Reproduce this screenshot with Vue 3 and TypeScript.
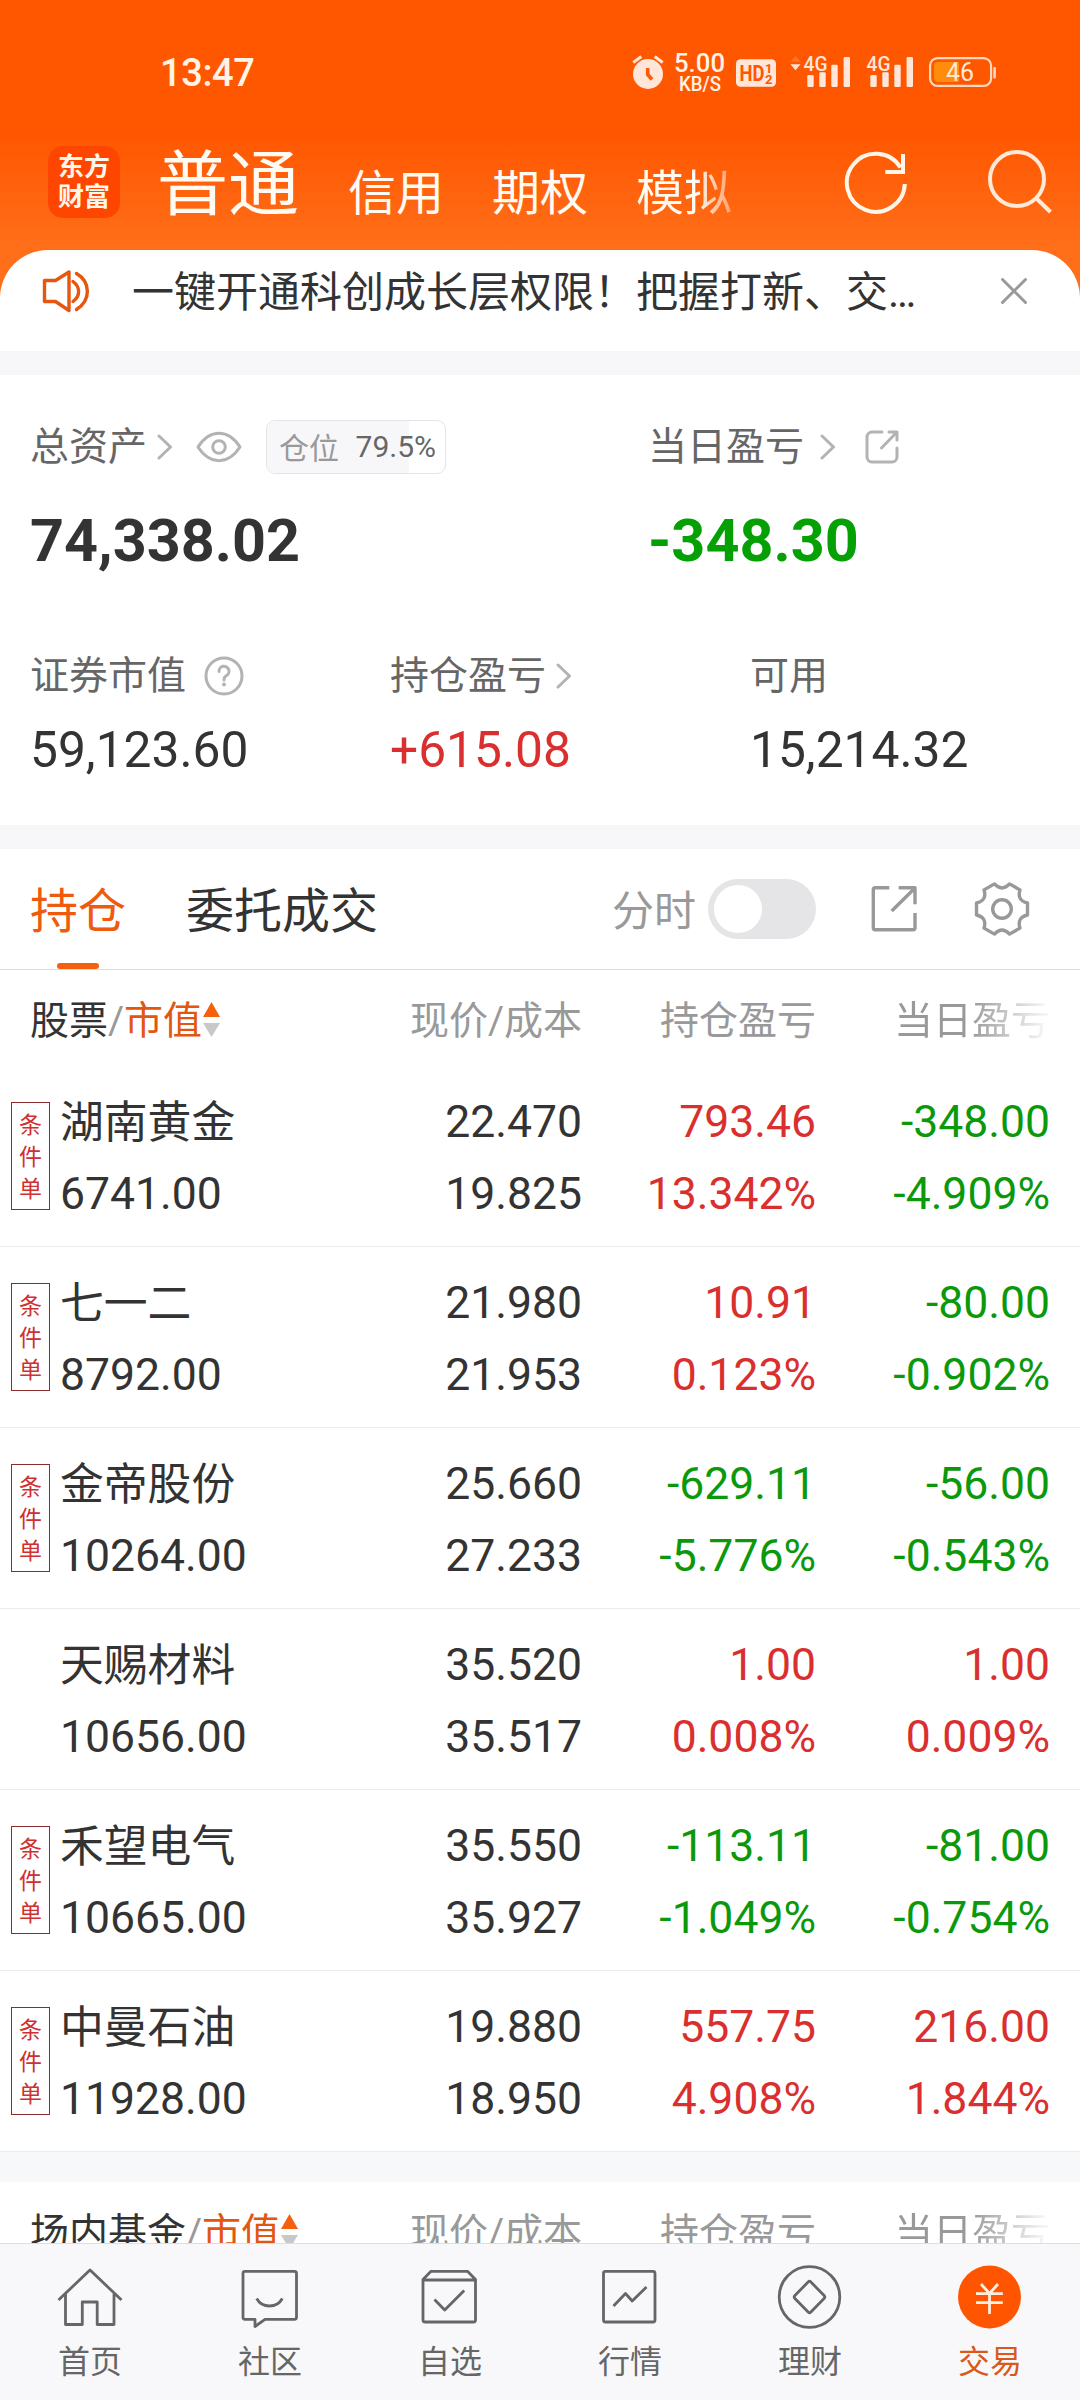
<script setup lang="ts">
interface Holding {
  name: string
  value: string
  price: string
  cost: string
  pnl: string
  pnlRate: string
  day: string
  dayRate: string
  tagged: boolean
}

const holdings: Holding[] = [
  { name: '湖南黄金', value: '6741.00', price: '22.470', cost: '19.825', pnl: '793.46', pnlRate: '13.342%', day: '-348.00', dayRate: '-4.909%', tagged: true },
  { name: '七一二', value: '8792.00', price: '21.980', cost: '21.953', pnl: '10.91', pnlRate: '0.123%', day: '-80.00', dayRate: '-0.902%', tagged: true },
  { name: '金帝股份', value: '10264.00', price: '25.660', cost: '27.233', pnl: '-629.11', pnlRate: '-5.776%', day: '-56.00', dayRate: '-0.543%', tagged: true },
  { name: '天赐材料', value: '10656.00', price: '35.520', cost: '35.517', pnl: '1.00', pnlRate: '0.008%', day: '1.00', dayRate: '0.009%', tagged: false },
  { name: '禾望电气', value: '10665.00', price: '35.550', cost: '35.927', pnl: '-113.11', pnlRate: '-1.049%', day: '-81.00', dayRate: '-0.754%', tagged: true },
  { name: '中曼石油', value: '11928.00', price: '19.880', cost: '18.950', pnl: '557.75', pnlRate: '4.908%', day: '216.00', dayRate: '1.844%', tagged: true },
]

const tone = (v: string): string => (v.startsWith('-') ? 'down' : 'up')

const position = 79.5
const bars = [
  { x: 0, h: 12 },
  { x: 12, h: 14.7 },
  { x: 24, h: 22.3 },
  { x: 36.3, h: 30 },
]
</script>

<template>
  <div class="page">
    <header class="top">
      <div class="status">
        <span class="clock">13:47</span>
        <svg class="status-icons" width="380" height="50" viewBox="625 50 380 50">
          <g fill="#ffe6d9">
            <circle cx="648" cy="74" r="15" />
            <path d="M633.3 62.5L641.3 56.5M654.7 56.5L662.7 62.5" stroke="#ffe6d9" stroke-width="3" fill="none" />
            <path d="M647.7 68v6.500l4.300 5" stroke="#ff5a0a" stroke-width="3.600" fill="none" />
            <text x="674" y="72.300" font-size="25" font-weight="500" textLength="51" lengthAdjust="spacingAndGlyphs" fill="#fff3e8">5.00</text>
            <text x="679" y="91" font-size="19.500" font-weight="500" textLength="42" lengthAdjust="spacingAndGlyphs" fill="#fff3e8">KB/S</text>
            <rect x="736" y="59.300" width="40" height="27.400" rx="4.500" />
            <text x="739.500" y="81" font-size="22" font-weight="700" textLength="25" lengthAdjust="spacingAndGlyphs" fill="#ff5500">HD</text>
            <text x="765" y="72.800" font-size="13" font-weight="700" fill="#ff5500">1</text>
            <text x="765" y="84" font-size="13" font-weight="700" fill="#ff5500">2</text>
            <path d="M790.500 61.800l5-5.800 5 5.800z" opacity=".22" />
            <path d="M790.500 64.200h10l-5 6z" />
            <text x="803.500" y="70.800" font-size="21" font-weight="500" textLength="24" lengthAdjust="spacingAndGlyphs">4G</text>
            <text x="866.500" y="70.800" font-size="21" font-weight="500" textLength="24" lengthAdjust="spacingAndGlyphs">4G</text>
            <template v-for="o in [807.3, 870.3]" :key="o">
              <rect v-for="b in bars" :key="b.x" :x="o + b.x" :y="87 - b.h" width="6.400" :height="b.h" rx="1.200" />
            </template>
          </g>
          <rect x="930.100" y="58.100" width="61" height="27.800" rx="7.500" fill="none" stroke="#ffd9bf" stroke-width="2.200" />
          <path d="M938 62h21v20h-21a4 4 0 0 1-4-4v-12a4 4 0 0 1 4-4z" fill="#ff8c0a" />
          <rect x="993.300" y="67" width="2.600" height="11.500" rx="1" fill="#ffd9bf" />
          <text x="946" y="81.300" font-size="26" textLength="28" lengthAdjust="spacingAndGlyphs" fill="#ffe9d2">46</text>
        </svg>
      </div>
      <div class="titlebar">
        <div class="logo"><span>东方</span><span>财富</span></div>
        <nav class="modes">
          <span class="mode current">普通</span>
          <span class="mode">信用</span>
          <span class="mode">期权</span>
          <span class="mode faded">模拟</span>
        </nav>
        <svg class="refresh" width="66" height="66" viewBox="-33 -33 66 66" fill="none" stroke="#fff6ea" stroke-width="4">
          <path d="M28.800 1A29 29 0 1 1 24.500-15.500" />
          <path d="M27-29V-11H9.300" />
        </svg>
        <svg class="search" width="66" height="66" viewBox="-33 -33 66 66" fill="none" stroke="#ffe9d8" stroke-width="4">
          <circle cx="-3" cy="-4" r="27" />
          <path d="M16 15L30.500 29" />
        </svg>
      </div>
    </header>

    <main class="body">
      <section class="notice">
        <svg width="48" height="44" viewBox="42 269 48 44" fill="none" stroke="#e6560f" stroke-width="3.400" stroke-linejoin="round" stroke-linecap="round">
          <path d="M44.500 280.500H55.500L69 272V310.500L55.500 301.500H44.500Z" />
          <path d="M73 281.500C80.500 287 80.500 296 73 301.500M76.500 273.500C91 282 91 300.500 76.500 309.500" />
        </svg>
        <p>一键开通科创成长层权限！把握打新、交…</p>
        <svg width="30" height="30" viewBox="-15 -15 30 30" stroke="#999" stroke-width="3" stroke-linecap="round">
          <path d="M-11.500-11.500L11.500 11.500M11.500-11.500L-11.500 11.500" />
        </svg>
      </section>

      <section class="assets">
        <div class="pair">
          <div class="cell">
            <div class="label">
              <span class="text">总资产</span>
              <svg class="chev" width="16" height="26" viewBox="0 0 16 26"><path d="M2 2L13.500 13L2 24" /></svg>
              <svg class="eye" width="46" height="32" viewBox="-23 -16 46 32">
                <path d="M-21 0C-9-18.200 9-18.200 21 0C9 18.200-9 18.200-21 0Z" />
                <circle r="6.300" />
              </svg>
              <span class="pill">
                <i class="fill" :style="{ width: position + '%' }"></i>
                <span class="pill-label">仓位</span>
                <span class="pill-value">{{ position }}%</span>
              </span>
            </div>
            <div class="big">74,338.02</div>
          </div>
          <div class="cell">
            <div class="label">
              <span class="text">当日盈亏</span>
              <svg class="chev wide" width="16" height="26" viewBox="0 0 16 26"><path d="M2 2L13.500 13L2 24" /></svg>
              <svg class="share" width="34" height="34" viewBox="0 0 34 34">
                <path d="M17 2H7a5 5 0 0 0-5 5V27a5 5 0 0 0 5 5H27a5 5 0 0 0 5-5V18M24 2H32V10M31.500 2.500L16.500 18" />
              </svg>
            </div>
            <div class="big down">-348.30</div>
          </div>
        </div>
        <div class="triple">
          <div class="cell">
            <div class="label">
              <span class="text">证券市值</span>
              <svg class="help" width="40" height="40" viewBox="-20 -20 40 40">
                <circle r="18" />
                <path d="M-5-4.500A5 5 0 1 1 2-.2C.5.800 0 1.800 0 4" />
                <circle class="dot" cy="8.500" r="2" />
              </svg>
            </div>
            <div class="mid">59,123.60</div>
          </div>
          <div class="cell">
            <div class="label">
              <span class="text">持仓盈亏</span>
              <svg class="chev" width="16" height="26" viewBox="0 0 16 26"><path d="M2 2L13.500 13L2 24" /></svg>
            </div>
            <div class="mid up">+615.08</div>
          </div>
          <div class="cell">
            <div class="label"><span class="text">可用</span></div>
            <div class="mid">15,214.32</div>
          </div>
        </div>
      </section>

      <section class="tabs">
        <span class="tab on">持仓</span>
        <span class="tab">委托成交</span>
        <span class="minute">分时</span>
        <span class="switch"><i></i></span>
        <svg class="tool" width="46" height="46" viewBox="871 886 46 46">
          <path d="M889.300 887.700H875.300a2 2 0 0 0-2 2V927.700a2 2 0 0 0 2 2H913a2 2 0 0 0 2-2V913M898.700 887.700H915V904.300M914.500 888.500L891.700 911" />
        </svg>
        <svg class="tool gear" width="58" height="58" viewBox="-29 -29 58 58">
          <path d="M25.500-6V6Q14.700 8.500 17.950 19.100L7.550 25.100Q0 17-7.550 25.100L-17.950 19.100Q-14.700 8.500-25.500 6V-6Q-14.700-8.500-17.950-19.100L-7.550-25.100Q0-17 7.550-25.100L17.950-19.100Q14.700-8.500 25.500-6Z" />
          <circle r="9.300" />
        </svg>
      </section>

      <section class="table">
        <div class="thead">
          <span class="first">股票<em>/</em><b>市值</b><svg width="17" height="36" viewBox="0 0 17 36"><path d="M8.500 0L17 15H0Z" fill="#f5600f" /><path d="M0 21H17L8.500 35Z" fill="#c8c8c8" /></svg></span>
          <span>现价/成本</span>
          <span>持仓盈亏</span>
          <span class="fadeout">当日盈亏</span>
        </div>
        <div v-for="h in holdings" :key="h.name" class="row">
          <div class="who">
            <div class="tag" :class="{ none: !h.tagged }">
              <template v-if="h.tagged"><span>条</span><span>件</span><span>单</span></template>
            </div>
            <div class="stack left"><span class="name">{{ h.name }}</span><span>{{ h.value }}</span></div>
          </div>
          <div class="stack"><span>{{ h.price }}</span><span>{{ h.cost }}</span></div>
          <div class="stack" :class="tone(h.pnl)"><span>{{ h.pnl }}</span><span>{{ h.pnlRate }}</span></div>
          <div class="stack" :class="tone(h.day)"><span>{{ h.day }}</span><span>{{ h.dayRate }}</span></div>
        </div>
      </section>

      <section class="table funds">
        <div class="thead">
          <span class="first">场内基金<em>/</em><b>市值</b><svg width="17" height="36" viewBox="0 0 17 36"><path d="M8.500 0L17 15H0Z" fill="#f5600f" /><path d="M0 21H17L8.500 35Z" fill="#c8c8c8" /></svg></span>
          <span>现价/成本</span>
          <span>持仓盈亏</span>
          <span class="fadeout">当日盈亏</span>
        </div>
      </section>
    </main>

    <footer class="nav">
      <div class="item">
        <svg width="66" height="66" viewBox="-33 -33 66 66"><path d="M-31.500 3L0-27L31.500 3M-24.500-3V27.500H-7.700V5H7.200V27.500H24V-3" /></svg>
        <span>首页</span>
      </div>
      <div class="item">
        <svg width="66" height="66" viewBox="-33 -33 66 66"><path d="M-25-25.700H24.500a2 2 0 0 1 2 2V20.300a2 2 0 0 1-2 2H-5L-15 29.500V22.300H-25a2 2 0 0 1-2-2V-23.700a2 2 0 0 1 2-2ZM-13.300 1.500C-8 11.500 7 11.500 12.300 1.500" /></svg>
        <span>社区</span>
      </div>
      <div class="item">
        <svg width="66" height="66" viewBox="-33 -33 66 66"><path d="M-27-17.500L-19-25.700H17.500L25.500-17.500V23a2 2 0 0 1-2 2H-25a2 2 0 0 1-2-2ZM-27-17H25.500M-15.500 2.500L-5.300 13L14.200-6.500" /></svg>
        <span>自选</span>
      </div>
      <div class="item">
        <svg width="66" height="66" viewBox="-33 -33 66 66"><rect x="-26.500" y="-25.700" width="51.500" height="50.700" rx="2" /><path d="M-16.500 9L-4.500-3.500L2.200 4L16.500-10" /></svg>
        <span>行情</span>
      </div>
      <div class="item">
        <svg width="66" height="66" viewBox="-33 -33 66 66"><circle cx="-.5" r="30.300" /><path d="M-1.900-15Q-.5-16.400.900-15L14.100-1.400Q15.500 0 14.100 1.400L.900 15Q-.5 16.400-1.900 15L-15.100 1.400Q-16.500 0-15.100-1.400Z" /></svg>
        <span>理财</span>
      </div>
      <div class="item active">
        <svg width="66" height="66" viewBox="-33 -33 66 66"><circle class="disc" cx="-.5" r="31.500" /><path class="yen" d="M-9-13L-.5-3.500L8-13M-.5-3.500V17M-14-3.300H12.800M-14 5.700H12.800" /></svg>
        <span>交易</span>
      </div>
    </footer>
  </div>
</template>

<style>
body {
  margin: 0;
  background: #fff;
}
</style>

<style scoped>
.page {
  width: 1080px;
  height: 2400px;
  display: flex;
  flex-direction: column;
  overflow: hidden;
  background: linear-gradient(#ff5600 0, #ff5600 130px, #ff6f1a 250px, #ff6f1a 310px, #fff 310px);
  font-family: Roboto, "Noto Sans CJK SC", sans-serif;
  font-weight: 400;
  color: #333;
}
svg {
  display: block;
  flex: none;
}
.top {
  height: 250px;
  flex: none;
}
.status {
  height: 50px;
  padding: 50px 75px 0 160px;
  display: flex;
  justify-content: space-between;
}
.clock {
  font-size: 38px;
  line-height: 46px;
  font-weight: 500;
  letter-spacing: -0.4px;
  color: #fff3e6;
}
.titlebar {
  height: 150px;
  padding: 0 27px 0 48px;
  display: flex;
  align-items: flex-start;
}
.logo {
  width: 72px;
  height: 72px;
  margin-top: 46px;
  border-radius: 15px;
  background: #ff4600;
  color: #fff6ea;
  font-weight: 700;
  font-size: 26px;
  line-height: 30px;
  display: flex;
  flex-direction: column;
  align-items: center;
  justify-content: center;
}
.modes {
  flex: 1;
  margin-left: 37px;
  height: 130px;
  display: flex;
  align-items: flex-start;
  gap: 48px;
  color: #fffaf2;
}
.mode {
  font-size: 48px;
  line-height: 60px;
  padding-top: 64px;
}
.current {
  font-size: 71px;
  line-height: 84px;
  padding-top: 43px;
  margin-right: 1px;
}
.faded {
  background: linear-gradient(90deg, #fffaf2 0, #fffaf2 62%, rgba(255, 250, 242, 0.4) 100%);
  background-clip: text;
  -webkit-background-clip: text;
  color: transparent;
}
.refresh {
  margin: 50px 31px 0 0;
}
.search {
  margin: 50px 0 0 47px;
}
.body {
  flex: 1;
  min-height: 0;
  overflow: hidden;
}
.notice {
  height: 101px;
  box-sizing: border-box;
  border-radius: 48px 48px 0 0;
  background: #fff;
  padding: 0 51px 19px 42px;
  display: flex;
  align-items: center;
}
.notice p {
  margin: 4px 0 0 42px;
  flex: 1;
  font-size: 42px;
  line-height: 60px;
  white-space: nowrap;
}
.assets {
  height: 450px;
  background: #fff;
  border-top: 24px solid #f7f7fa;
  border-bottom: 24px solid #f7f7fa;
  padding: 0 30px;
}
.label {
  height: 60px;
  display: flex;
  align-items: center;
  font-size: 39px;
  color: #666;
  white-space: nowrap;
}
.label .text {
  line-height: 54px;
  padding-bottom: 1px;
}
.label svg {
  fill: none;
  stroke: #b3b3b3;
  stroke-width: 3;
  stroke-linecap: round;
  stroke-linejoin: round;
}
.pair {
  display: flex;
  padding-top: 42px;
}
.pair .cell {
  width: 618px;
}
.pair .cell + .cell {
  width: auto;
}
.chev {
  margin-left: 10px;
}
.chev.wide {
  margin-left: 16px;
}
.eye {
  margin-left: 23px;
}
.share {
  margin-left: 28.5px;
}
.label .help {
  margin-left: 18px;
}
.label .help .dot {
  fill: #b3b3b3;
  stroke: none;
}
.pill {
  position: relative;
  margin-left: 24px;
  box-sizing: border-box;
  width: 180px;
  height: 54px;
  border: 1px solid #e4e4e6;
  border-radius: 9px;
  overflow: hidden;
  display: flex;
  align-items: center;
  padding: 0 9px 2px 12px;
  justify-content: space-between;
}
.fill {
  position: absolute;
  left: 0;
  top: 0;
  bottom: 0;
  background: #f7f7fa;
}
.pill-label,
.pill-value {
  position: relative;
  font-size: 30px;
  color: #999;
}
.pill-value {
  color: #666;
}
.big {
  font-size: 59.3px;
  line-height: 80px;
  margin-top: 24px;
  font-weight: 700;
}
.triple {
  display: flex;
  padding-top: 65px;
}
.triple .cell {
  width: 360px;
  flex: none;
}
.triple .cell:last-child {
  width: 300px;
}
.mid {
  font-size: 49.7px;
  line-height: 60px;
  margin-top: 14px;
}
.up {
  color: #d9302f;
}
.down {
  color: #0b990b;
}
.big.down {
  color: #04a004;
}
.tabs {
  height: 120px;
  background: #fff;
  border-bottom: 1px solid #dedee0;
  padding: 0 49px 0 30px;
  display: flex;
  align-items: center;
}
.tab {
  position: relative;
  font-size: 48px;
  line-height: 114px;
  padding-top: 6px;
  margin-right: 60px;
}
.on {
  color: #ee5a0e;
}
.on::after {
  content: "";
  position: absolute;
  left: 27px;
  bottom: 0;
  width: 42px;
  height: 6px;
  border-radius: 3px;
  background: #f5600f;
}
.minute {
  margin-left: auto;
  padding-bottom: 4px;
  font-size: 42px;
  color: #999;
}
.switch {
  width: 108px;
  height: 60px;
  box-sizing: border-box;
  padding: 6px;
  margin-left: 12px;
  border-radius: 30px;
  background: #e5e5e7;
}
.switch i {
  display: block;
  width: 48px;
  height: 48px;
  border-radius: 50%;
  background: #fff;
}
.tool {
  margin-left: 55px;
  fill: none;
  stroke: #999;
  stroke-width: 3.4;
  stroke-linejoin: round;
}
.gear {
  margin-left: 56px;
}
.table {
  background: #fff;
}
.thead,
.row {
  display: grid;
  grid-template-columns: 348px 234px 234px 234px;
}
.thead {
  height: 96px;
  box-sizing: border-box;
  padding-top: 20px;
  align-items: start;
  line-height: 62px;
  font-size: 39px;
  color: #999;
  text-align: right;
}
.thead .first {
  display: flex;
  align-items: center;
  height: 62px;
  padding-left: 30px;
  color: #333;
}
.first em {
  font-style: normal;
  color: #999;
}
.first b {
  font-weight: 400;
  color: #e2570f;
}
.first svg {
  margin: 0 0 3px 1px;
}
.fadeout {
  background: linear-gradient(90deg, #999 0, #999 66%, #f4f4f4 97%);
  background-clip: text;
  -webkit-background-clip: text;
  color: transparent;
}
.row {
  height: 181px;
  box-sizing: border-box;
  padding-top: 20px;
  border-bottom: 1px solid #ebebed;
  font-size: 44.5px;
  line-height: 72px;
}
.stack {
  display: flex;
  flex-direction: column;
  align-items: flex-end;
}
.stack.left {
  align-items: flex-start;
}
.stack.left .name {
  font-size: 43.8px;
  line-height: 70px;
  padding-top: 2px;
}
.who {
  display: flex;
  align-items: flex-start;
}
.tag {
  width: 39px;
  height: 108px;
  box-sizing: border-box;
  margin: 16px 10px 0 11px;
  padding-top: 3px;
  border: 1px solid #8c2b2b;
  color: #cf3030;
  font-size: 23px;
  line-height: 32px;
  display: flex;
  flex-direction: column;
  align-items: center;
  justify-content: center;
}
.tag.none {
  border-color: transparent;
}
.funds {
  border-top: 30px solid #f7f8fa;
}
.nav {
  height: 157px;
  flex: none;
  box-sizing: border-box;
  border-top: 1px solid #dedee0;
  background: #f8f8fa;
  display: flex;
}
.item {
  width: 180px;
  padding-top: 20px;
  display: flex;
  flex-direction: column;
  align-items: center;
  font-size: 32px;
  line-height: 40px;
  color: #666;
}
.item svg {
  fill: none;
  stroke: #666;
  stroke-width: 2.8;
  stroke-linejoin: round;
}
.item span {
  margin-top: 12px;
}
.item.active {
  color: #d9591a;
}
.item .disc {
  fill: #ff5500;
  stroke: none;
}
.item .yen {
  stroke: #ffeee2;
}
</style>
